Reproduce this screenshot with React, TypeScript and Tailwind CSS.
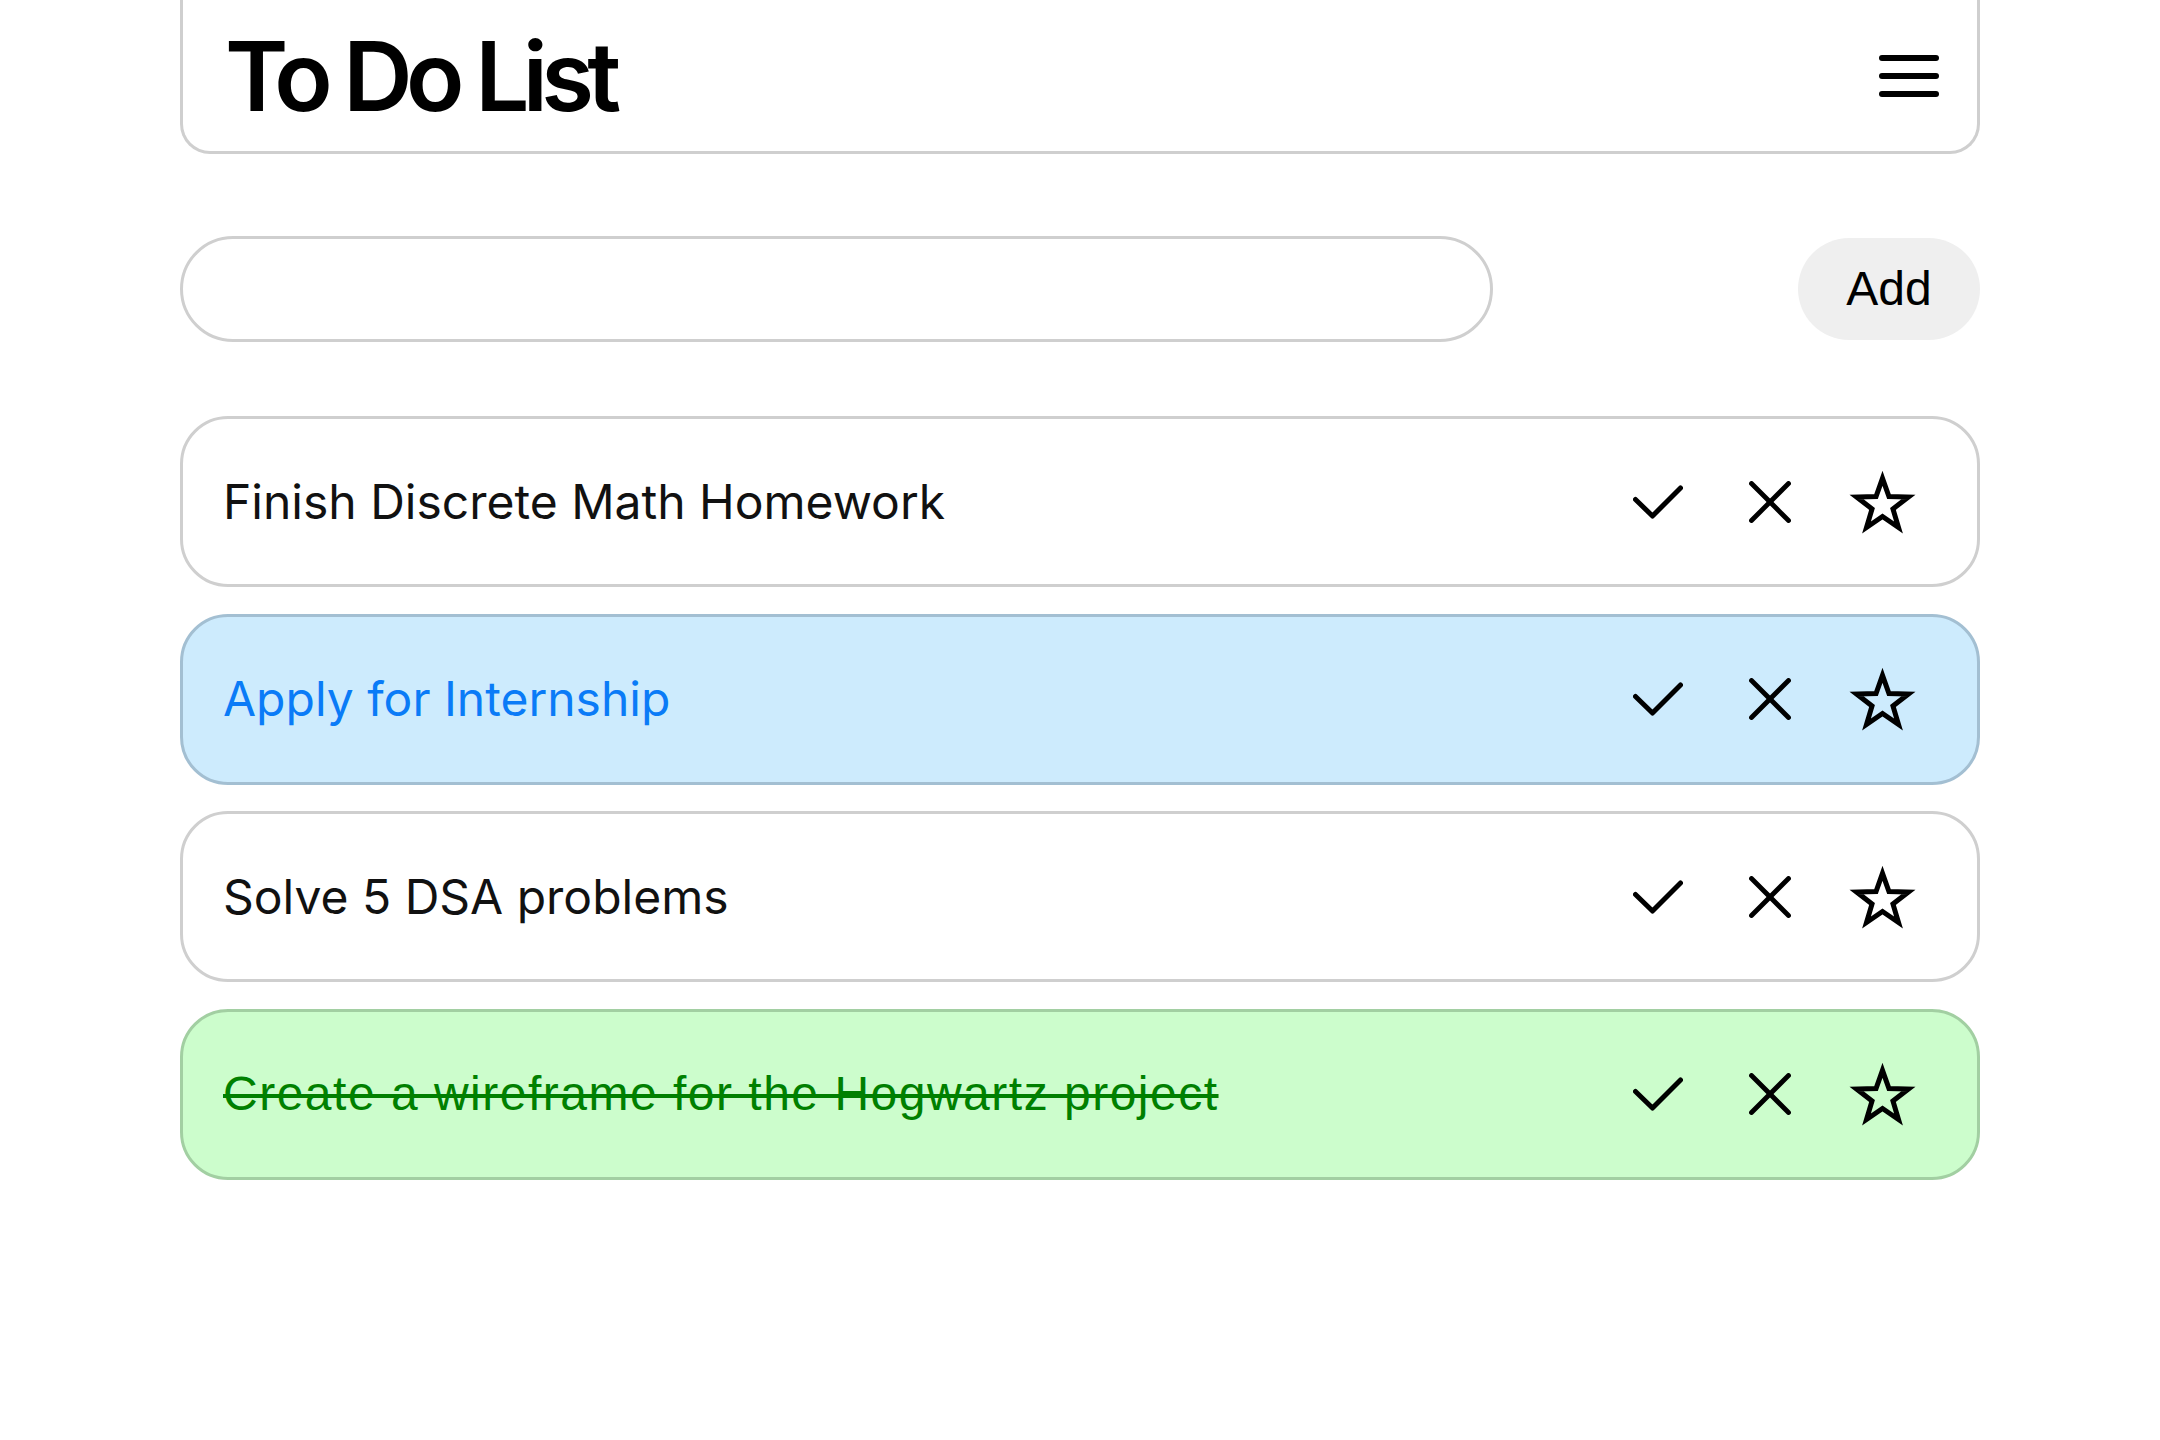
import React, { useState } from 'react';

type Task = { id: number; text: string; status: 'normal' | 'starred' | 'done' };

const initialTasks: Task[] = [
  { id: 1, text: 'Finish Discrete Math Homework', status: 'normal' },
  { id: 2, text: 'Apply for Internship', status: 'starred' },
  { id: 3, text: 'Solve 5 DSA problems', status: 'normal' },
  { id: 4, text: 'Create a wireframe for the Hogwartz project', status: 'done' },
];

const CheckIcon = () => (
  <svg width="50" height="34" viewBox="0 0 50 34" fill="none" stroke="#000" strokeWidth="5" strokeLinecap="round" strokeLinejoin="round">
    <polyline points="2.5,14.5 19.5,31 47.5,3" />
  </svg>
);

const XIcon = () => (
  <svg width="42" height="42" viewBox="0 0 42 42" fill="none" stroke="#000" strokeWidth="4.8" strokeLinecap="round">
    <line x1="2.5" y1="2.5" x2="39.5" y2="39.5" />
    <line x1="39.5" y1="2.5" x2="2.5" y2="39.5" />
  </svg>
);

const StarIcon = () => (
  <svg width="67" height="64" viewBox="0 0 67 64" fill="none" stroke="#000" strokeWidth="5" strokeLinejoin="miter">
    <polygon points="33.5,8.3 39.97,26.6 59.37,27.1 43.96,38.9 49.49,57.5 33.5,46.5 17.51,57.5 23.04,38.9 7.63,27.1 27.03,26.6" />
  </svg>
);

const MenuIcon = () => (
  <svg width="60" height="42" viewBox="0 0 60 42" fill="none" stroke="#000" strokeWidth="6" strokeLinecap="round">
    <line x1="3" y1="3" x2="57" y2="3" />
    <line x1="3" y1="21" x2="57" y2="21" />
    <line x1="3" y1="39" x2="57" y2="39" />
  </svg>
);

const TaskRow = ({ task }: { task: Task }) => {
  const rowStyle =
    task.status === 'starred'
      ? 'bg-[#cdebfd] border-[#a3bfd2]'
      : task.status === 'done'
      ? 'bg-[#ccfdcc] border-[#a2cfa2]'
      : 'bg-white border-[#cfcfcf]';

  return (
    <div className={`flex items-center h-[171px] rounded-[48px] border-[3px] pl-[40px] pr-[39px] ${rowStyle}`}>
      {task.status === 'done' ? (
        <span className="flex-1 text-[48px] tracking-[1.5px] text-[#008000] line-through decoration-[4px] font-['Liberation_Sans',Arial,sans-serif]">
          {task.text}
        </span>
      ) : (
        <span
          className={`flex-1 text-[48px] font-['Inter',sans-serif] ${
            task.status === 'starred' ? 'text-[#0a7bf7]' : 'text-[#111]'
          }`}
        >
          {task.text}
        </span>
      )}
      <div className="flex items-center">
        <button className="w-[112px] h-[80px] flex items-center justify-center">
          <CheckIcon />
        </button>
        <button className="w-[112px] h-[80px] flex items-center justify-center">
          <XIcon />
        </button>
        <button className="w-[112px] h-[80px] flex items-center justify-center">
          <StarIcon />
        </button>
      </div>
    </div>
  );
};

export default function App() {
  const [tasks] = useState<Task[]>(initialTasks);
  const [value, setValue] = useState('');

  return (
    <div className="min-h-screen bg-white">
      <div className="w-[1800px] mx-auto">
        <header className="flex items-center justify-between h-[154px] border-[3px] border-t-0 border-[#cfcfcf] rounded-b-[30px] pl-[42px] pr-[38px]">
          <h1 className="text-[96px] leading-none font-semibold tracking-[-0.07em] text-black font-['Inter',sans-serif]">
            To Do List
          </h1>
          <button className="flex items-center justify-center">
            <MenuIcon />
          </button>
        </header>

        <div className="flex items-center justify-between mt-[82px]">
          <input
            value={value}
            onChange={e => setValue(e.target.value)}
            className="w-[1313px] h-[106px] rounded-full border-[3px] border-[#cfcfcf] px-[40px] text-[48px] outline-none font-['Inter',sans-serif]"
          />
          <button className="w-[182px] h-[102px] rounded-full bg-[#efefef] text-[48px] text-black font-['Liberation_Sans',Arial,sans-serif]">
            Add
          </button>
        </div>

        <div className="flex flex-col gap-[26.5px] mt-[74px]">
          {tasks.map(t => (
            <TaskRow key={t.id} task={t} />
          ))}
        </div>
      </div>
    </div>
  );
}
